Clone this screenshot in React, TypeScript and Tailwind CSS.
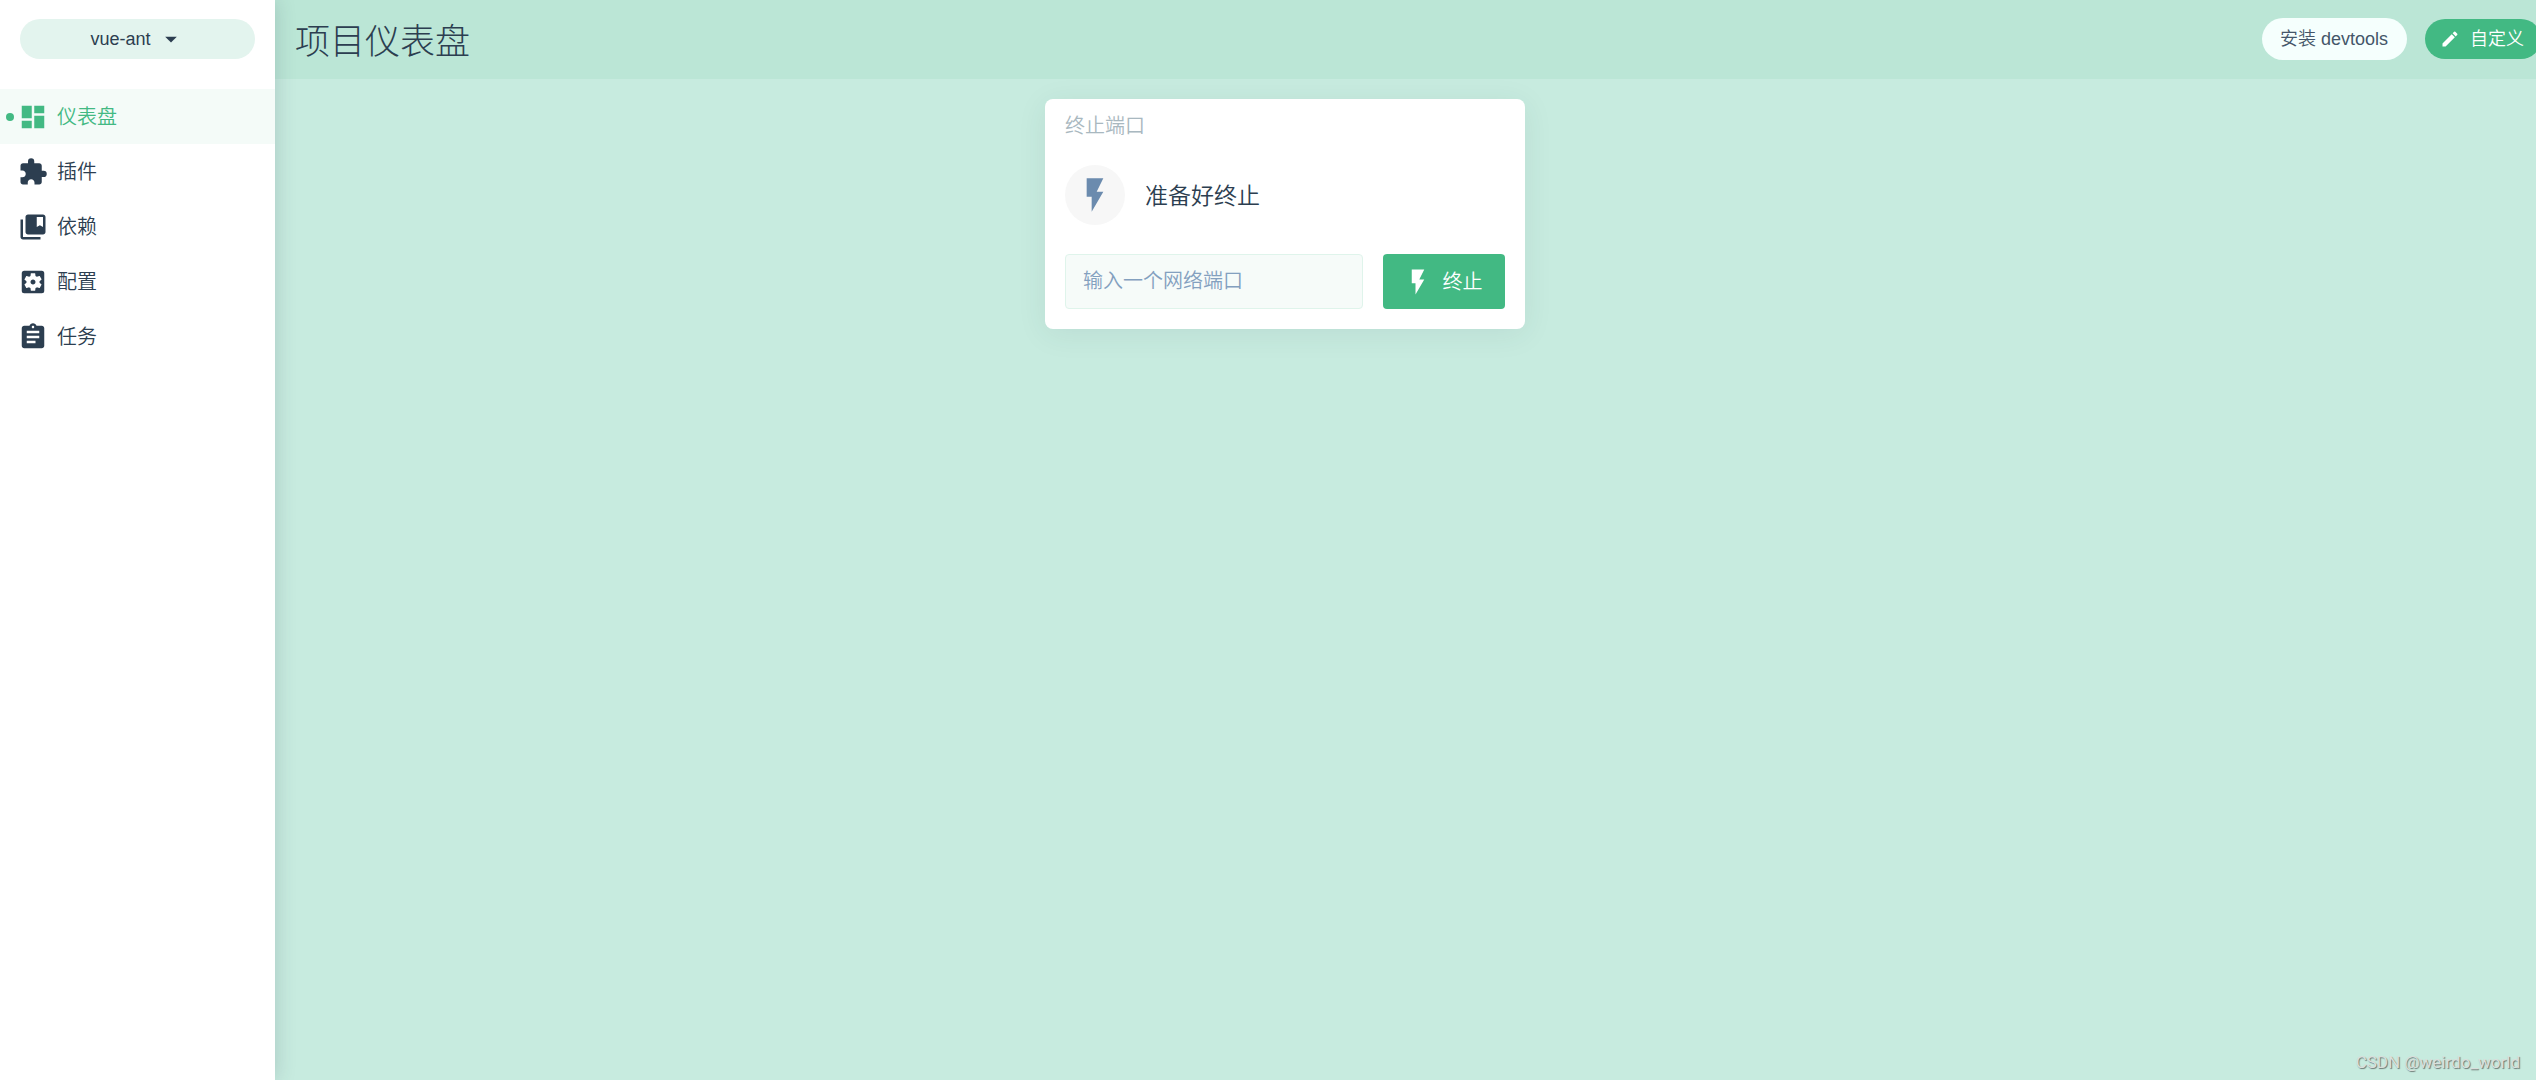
import { useState } from "react"
import { MdArrowDropDown, MdAssignment, MdCollectionsBookmark, MdDashboard, MdEdit, MdExtension, MdFlashOn, MdSettingsApplications } from "react-icons/md"

const navItems = [
  { id: "dashboard", label: "仪表盘", icon: MdDashboard },
  { id: "plugins", label: "插件", icon: MdExtension },
  { id: "dependencies", label: "依赖", icon: MdCollectionsBookmark },
  { id: "configuration", label: "配置", icon: MdSettingsApplications },
  { id: "tasks", label: "任务", icon: MdAssignment },
]

function Sidebar() {
  const [active, setActive] = useState("dashboard")

  return (
    <aside className="z-10 w-[275px] shrink-0 bg-white shadow-[0_0_20px_rgba(44,62,80,0.2)]">
      <div className="px-5 pt-[19px] pb-[30px]">
        <button className="flex h-10 w-full items-center justify-center gap-[6px] rounded-full bg-[#e3f4ee] text-lg">
          vue-ant <MdArrowDropDown size={28} />
        </button>
      </div>
      <nav>
        {navItems.map(({ id, label, icon: Icon }) => (
          <a
            key={id}
            href={`#${id}`}
            onClick={() => setActive(id)}
            className={`relative flex h-[55px] items-center gap-[9px] px-[18px] pt-px text-xl font-[350] ${active === id ? "bg-[#f4fbf8] text-[#42b983]" : ""}`}
          >
            {active === id && <span className="absolute top-1/2 left-[6px] size-2 -translate-y-1/2 rounded-full bg-[#42b983]" />}
            <Icon size={30} />
            {label}
          </a>
        ))}
      </nav>
    </aside>
  )
}

function Header() {
  return (
    <header className="flex h-[79px] items-center bg-[#bbe6d6] pb-px pl-5">
      <h1 className="flex-1 pt-[6px] text-[35px] font-light">项目仪表盘</h1>
      <div className="-mr-[5px] flex shrink-0 items-center gap-[18px]">
        <button className="h-[42px] rounded-full bg-[#f5fffd] pr-[19px] pl-[18px] text-lg font-[350] text-[#445669]">安装 devtools</button>
        <button className="flex h-10 items-center gap-[10px] rounded-full bg-[#42b983] pr-[17px] pl-[15px] text-lg font-[350] text-white">
          <MdEdit size={20} /> 自定义
        </button>
      </div>
    </header>
  )
}

function KillPortWidget() {
  const [port, setPort] = useState("")

  return (
    <section className="w-[480px] rounded-lg bg-white px-5 pb-5 shadow-[0_5px_30px_rgba(44,62,80,0.08)]">
      <h2 className="pt-3 text-xl leading-[30px] font-[350] text-[#a9b8c0]">终止端口</h2>
      <div className="mt-6 flex items-center gap-5">
        <div className="flex size-[60px] items-center justify-center rounded-full bg-[#f7f7f7] text-[#6b8bae]">
          <MdFlashOn size={40} />
        </div>
        <p className="pt-[2px] text-[23px] font-[350]">准备好终止</p>
      </div>
      <form className="mt-[29px] flex gap-5" onSubmit={e => e.preventDefault()}>
        <input
          aria-label="输入一个网络端口"
          placeholder="输入一个网络端口"
          value={port}
          onChange={e => setPort(e.target.value)}
          className="h-[55px] min-w-0 flex-1 rounded border border-[#dff4eb] bg-[#f6fbf9] px-[17px] text-xl font-[350] outline-none placeholder:text-[#83a0bf]"
        />
        <button className="flex h-[55px] w-[122px] items-center justify-center gap-[10px] rounded bg-[#42b983] pr-[3px] text-xl font-[350] text-white">
          <MdFlashOn size={30} /> 终止
        </button>
      </form>
    </section>
  )
}

export default function App() {
  return (
    <div className="flex min-h-screen overflow-hidden bg-[#c7ebdf] font-['Liberation_Sans','Noto_Sans_CJK_SC',sans-serif] text-[#2c3e50]">
      <Sidebar />
      <div className="flex min-w-0 flex-1 flex-col">
        <Header />
        <main className="flex flex-1 items-start justify-center pt-5 pr-[241px]">
          <KillPortWidget />
        </main>
        <footer className="px-4 pb-[5px] text-right font-['Roboto',sans-serif] text-[17px] text-[#d9dfdc] [text-shadow:1px_1px_1px_#6b7773]">CSDN @weirdo_world</footer>
      </div>
    </div>
  )
}
